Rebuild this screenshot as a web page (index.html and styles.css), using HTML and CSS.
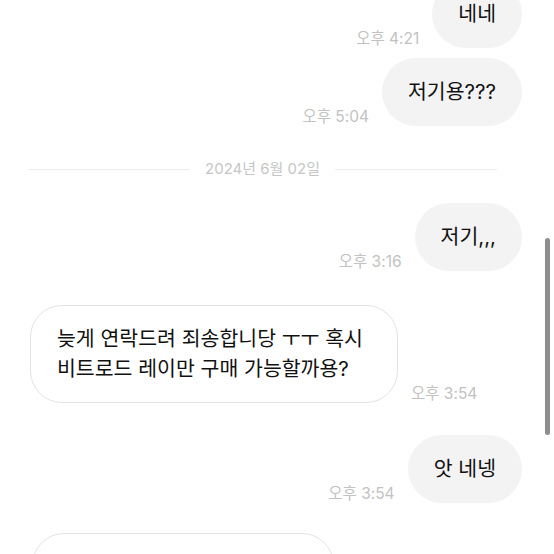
FILE: index.html
```html
<!DOCTYPE html>
<html lang="ko">
<head>
<meta charset="utf-8">
<link rel="stylesheet" href="styles.css">
</head>
<body>
<div class="screen">
  <div class="chat">
    <div class="row row-me first">
      <span class="time">오후 4:21</span>
      <div class="bubble bubble-me">네네</div>
    </div>
    <div class="row row-me same">
      <span class="time">오후 5:04</span>
      <div class="bubble bubble-me">저기용???</div>
    </div>
    <div class="date-sep">
      <span class="line"></span>
      <span class="date-text">2024년 6월 02일</span>
      <span class="line"></span>
    </div>
    <div class="row row-me after-date">
      <span class="time">오후 3:16</span>
      <div class="bubble bubble-me">저기,,,</div>
    </div>
    <div class="row row-other switch">
      <div class="bubble bubble-other">늦게 연락드려 죄송합니당 ㅜㅜ 혹시<br>비트로드 레이만 구매 가능할까용?</div>
      <span class="time">오후 3:54</span>
    </div>
    <div class="row row-me switch">
      <span class="time">오후 3:54</span>
      <div class="bubble bubble-me">앗 네넹</div>
    </div>
    <div class="row row-other switch2">
      <div class="bubble bubble-other partial"></div>
    </div>
  </div>
  <div class="scrollbar"></div>
</div>
</body>
</html>
```

FILE: styles.css
```css
html, body {
  margin: 0;
  padding: 0;
  background: #ffffff;
}

.screen {
  position: relative;
  width: 554px;
  height: 554px;
  overflow: hidden;
  font-family: "Inter", "Noto Sans CJK KR", "Noto Sans", sans-serif;
}

.chat {
  display: flex;
  flex-direction: column;
  padding: 0 32px 0 30px;
  margin-top: -20px;
}

.row {
  display: flex;
  align-items: flex-end;
  gap: 13px;
}

.row-me {
  justify-content: flex-end;
}

.row-other {
  justify-content: flex-start;
}

.same { margin-top: 10px; }
.after-date { margin-top: 24px; }
.switch { margin-top: 34px; }
.row-me.switch { margin-top: 32px; }
.switch2 { margin-top: 30px; }

.bubble {
  font-size: 20.5px;
  line-height: 28px;
  color: #111111;
  padding: 20px 26px;
  border-radius: 34px;
  white-space: nowrap;
}

.bubble-me {
  background: #f3f3f3;
}

.bubble-other {
  background: #ffffff;
  border: 1px solid #e3e3e3;
  padding: 18px 34px 18px 26px;
  line-height: 30px;
  border-radius: 32px;
}

.bubble-other.partial {
  width: 240px;
  height: 60px;
  margin-left: 2px;
}

.time {
  font-size: 15.5px;
  line-height: 18px;
  color: #c2c2c2;
  white-space: nowrap;
}

.date-sep {
  display: flex;
  align-items: center;
  gap: 15px;
  margin: 33px 25px 0 -2px;
  height: 20px;
}

.date-sep .line {
  flex: 1;
  height: 1px;
  background: #ededed;
}

.date-text {
  font-size: 15px;
  line-height: 20px;
  color: #c6c6c6;
  white-space: nowrap;
}

.scrollbar {
  position: absolute;
  right: 4px;
  top: 238px;
  width: 5px;
  height: 197px;
  border-radius: 3px;
  background: #8e8e8e;
}
```
